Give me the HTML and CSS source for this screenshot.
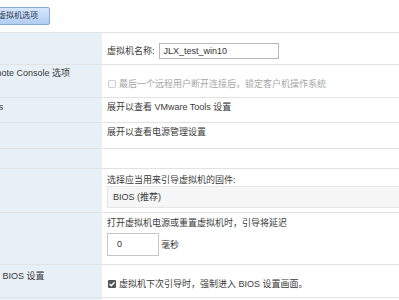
FILE: index.html
```html
<!DOCTYPE html>
<html lang="zh">
<head>
<meta charset="utf-8">
<link rel="stylesheet" href="styles.css">
</head>
<body>
<div class="page">
  <div class="toolbar">
    <span class="tab">虚拟机选项</span>
  </div>
  <div class="grid">
    <div class="row r1">
      <div class="label"></div>
      <div class="value"><span class="field-label">虚拟机名称:</span><span class="text-input name-input">JLX_test_win10</span></div>
    </div>
    <div class="row r2">
      <div class="label top">VMware Remote Console 选项</div>
      <div class="value"><span class="check"></span><span class="disabled">最后一个远程用户断开连接后，锁定客户机操作系统</span></div>
    </div>
    <div class="row r3">
      <div class="label top">VMware Tools</div>
      <div class="value">展开以查看 VMware Tools 设置</div>
    </div>
    <div class="row r4">
      <div class="label top">电源管理</div>
      <div class="value">展开以查看电源管理设置</div>
    </div>
    <div class="row r5">
      <div class="label top">引导选项</div>
      <div class="value"></div>
    </div>
    <div class="row r6">
      <div class="label sub">固件</div>
      <div class="value stack">
        <div>选择应当用来引导虚拟机的固件:</div>
        <div class="select">BIOS (推荐)</div>
      </div>
    </div>
    <div class="row r7">
      <div class="label sub">引导延迟</div>
      <div class="value stack">
        <div>打开虚拟机电源或重置虚拟机时，引导将延迟</div>
        <div class="delay"><span class="text-input ms-input">0</span><span class="unit">毫秒</span></div>
      </div>
    </div>
    <div class="row r8">
      <div class="label sub">强制执行 BIOS 设置</div>
      <div class="value"><span class="check checked"><svg viewBox="0 0 8 8" width="8" height="8"><path d="M1.6 4.1 L3.3 5.8 L6.5 2.2" fill="none" stroke="#fff" stroke-width="1.4"/></svg></span><span>虚拟机下次引导时，强制进入 BIOS 设置画面。</span></div>
    </div>
    <div class="row r9">
      <div class="label sub"></div>
      <div class="value"></div>
    </div>
  </div>
</div>
</body>
</html>
```

FILE: styles.css
```css
html, body {
  margin: 0;
  padding: 0;
  background: #fff;
  overflow: hidden;
}
body {
  font-family: "Liberation Sans", Arial, "Noto Sans CJK SC", sans-serif;
  font-size: 9px;
  line-height: 12px;
  color: #3a3a3a;
}
.page {
  margin-left: -60px;
  width: 520px;
}
.toolbar {
  height: 32px;
  padding-top: 7px;
  box-sizing: border-box;
  padding-left: 46px;
}
.tab {
  display: inline-block;
  height: 18px;
  box-sizing: border-box;
  padding: 0 11px;
  line-height: 16px;
  font-size: 8px;
  border: 1px solid #86a9d8;
  border-radius: 2px;
  background: linear-gradient(#d6e6fb, #b2cdf2);
  color: #2b3a4e;
}
.grid {
  border-top: 1px solid #e2e2e2;
}
.row {
  display: grid;
  grid-template-columns: 162px 1fr;
  border-bottom: 1px solid #e2e2e2;
  box-sizing: border-box;
}
.label {
  background: #e7f0f7;
  white-space: nowrap;
  overflow: hidden;
}
.label.top { padding-left: 7px; }
.label.sub { padding-left: 24px; }
.value {
  padding-left: 5px;
  display: flex;
  align-items: flex-start;
  white-space: nowrap;
}
.value.stack {
  flex-direction: column;
}
.r1 { height: 32px; }
.r1 .value { padding-top: 4px; align-items: center; }
.field-label { margin-right: 4px; }
.text-input {
  display: inline-block;
  box-sizing: border-box;
  border: 1px solid #b8b8b8;
  background: #fff;
  color: #333;
}
.name-input {
  width: 120px;
  height: 16px;
  line-height: 14px;
  padding-left: 4px;
}
.r2 { height: 33px; }
.r2 .label { padding-top: 2px; }
.r2 .value { padding-top: 5px; align-items: center; }
.check {
  display: inline-block;
  width: 8px;
  height: 8px;
  box-sizing: border-box;
  border: 1px solid #d0d0d0;
  border-radius: 1px;
  background: #fafafa;
  margin: 0 3px 0 1px;
}
.check.checked {
  border: none;
  background: #555;
}
.check svg { display: block; }
.disabled { color: #a6a6a6; }
.r3 { height: 25px; }
.r3 .label, .r3 .value { padding-top: 3px; }
.r4 { height: 26px; }
.r4 .label, .r4 .value { padding-top: 3px; }
.r5 { height: 20px; }
.r5 .label { padding-top: 3px; }
.r6 { height: 44px; }
.r6 .label, .r6 .value { padding-top: 5px; }
.select {
  height: 22px;
  box-sizing: border-box;
  border: 1px solid #e6e6e6;
  border-right: none;
  background: #f6f6f6;
  padding-left: 5px;
  line-height: 20px;
  width: 100%;
}
.r7 { height: 52px; }
.r7 .label, .r7 .value { padding-top: 4px; }
.delay {
  margin-top: 4px;
  display: flex;
  align-items: center;
}
.ms-input {
  width: 52px;
  height: 23px;
  line-height: 21px;
  padding-left: 9px;
  border-color: #c6c6c6;
}
.unit { margin-left: 2px; }
.r8 { height: 33px; }
.r8 .label { padding-top: 5px; }
.r8 .value { padding-top: 6px; align-items: center; }
.r9 { height: 30px; }
```
